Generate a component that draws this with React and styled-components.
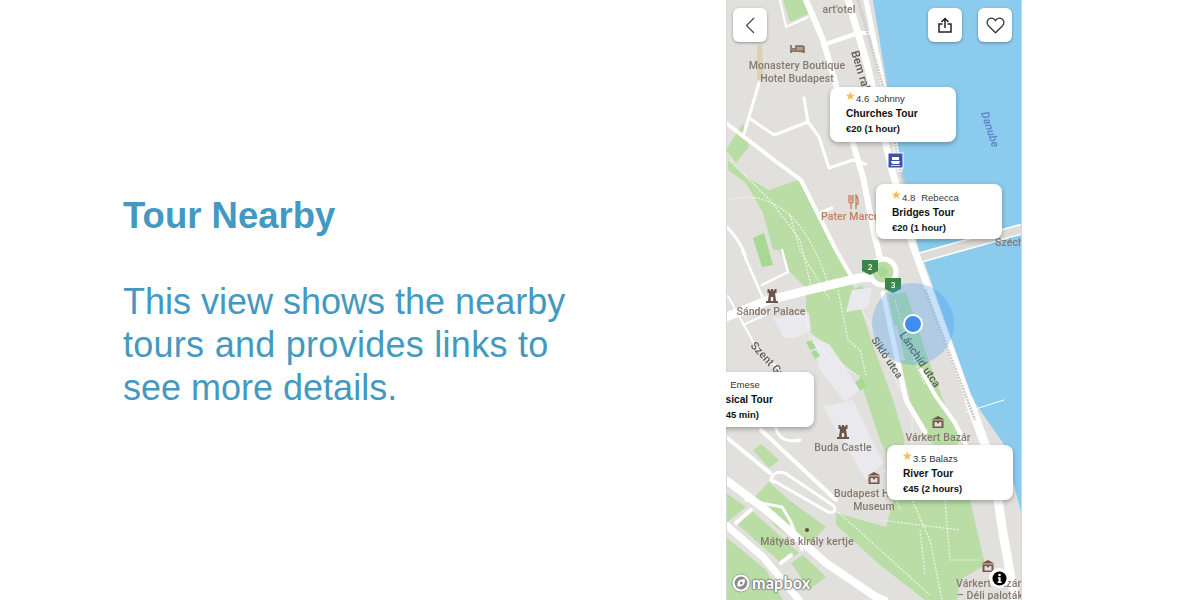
import React from 'react';
import styled, { createGlobalStyle } from 'styled-components';

const GlobalStyle = createGlobalStyle`
  body {
    margin: 0;
    background: #fff;
    font-family: "Liberation Sans", Arial, sans-serif;
  }
`;

const Page = styled.div`
  display: flex;
  width: 1200px;
  height: 600px;
  overflow: hidden;
`;

const Intro = styled.section`
  width: 726px;
  flex-shrink: 0;
  box-sizing: border-box;
  padding: 194px 0 0 123px;
  color: #4399c0;
  font-size: 36px;
  line-height: 43px;
`;

const Title = styled.h1`
  margin: 0 0 43px;
  font-size: 36.5px;
  line-height: 43px;
  font-weight: 700;
`;

const BodyLine = styled.div`
  letter-spacing: ${(p) => p.$tracking || 0}px;
  white-space: nowrap;
`;

const Phone = styled.div`
  position: relative;
  flex-shrink: 0;
  width: 296px;
  height: 600px;
  overflow: hidden;
  box-sizing: border-box;
`;

const MapSvg = styled.svg`
  display: block;
  width: 296px;
  height: 600px;
  filter: blur(0.35px);
`;

const MapLabel = styled.text`
  font-family: Roboto, "Noto Sans", sans-serif;
  font-size: ${(p) => p.$size || 10.5}px;
  font-weight: 500;
  fill: ${(p) => p.$color || '#85796f'};
  font-style: ${(p) => (p.$italic ? 'italic' : 'normal')};
  text-anchor: ${(p) => p.$anchor || 'middle'};
  letter-spacing: 0.1px;
`;

const IconButton = styled.button`
  position: absolute;
  top: 8px;
  left: ${(p) => p.$left}px;
  width: 34px;
  height: 34px;
  padding: 0;
  border: 0;
  border-radius: 6px;
  background: #fff;
  box-shadow: 0 1px 3px rgba(0, 0, 0, 0.35);
  display: flex;
  align-items: center;
  justify-content: center;
`;

const TourCard = styled.div`
  position: absolute;
  left: ${(p) => p.$left}px;
  top: ${(p) => p.$top}px;
  width: 126px;
  height: 55px;
  box-sizing: border-box;
  padding: ${(p) => p.$pad}px 0 0 16px;
  border-radius: 8px;
  background: #fff;
  box-shadow: 0 2px 5px rgba(0, 0, 0, 0.3);
  color: #111;
  white-space: nowrap;
`;

const CardRating = styled.div`
  display: flex;
  align-items: center;
  height: 14px;
  margin: 0 0 2px ${(p) => p.$shift || 0}px;
  font-size: 9.5px;
  color: #333;
`;

const Star = styled.span`
  color: #f5c04a;
  font-size: 12px;
  line-height: 11px;
  width: 11px;
  margin: -3px 0 0 -1px;
  font-family: "DejaVu Sans", sans-serif;
`;

const Guide = styled.span`
  margin-left: ${(p) => p.$gap}px;
`;

const CardTitle = styled.div`
  font-size: 10.2px;
  font-weight: 700;
  line-height: 14px;
`;

const CardPrice = styled.div`
  margin-top: 1px;
  font-size: 9.5px;
  font-weight: 700;
  line-height: 14px;
`;

const Attribution = styled.div`
  position: absolute;
  left: 5px;
  bottom: 7px;
  display: flex;
  align-items: center;
  gap: 1px;
`;

const MapboxWord = styled.span`
  font-family: Lato, sans-serif;
  font-weight: 900;
  font-size: 16px;
  line-height: 20px;
  letter-spacing: 0.2px;
  color: #fff;
  text-shadow: 0 0 1.5px #555, 0 0 1.5px #555, 0 0 2px #777;
`;

const InfoHalo = styled.div`
  position: absolute;
  left: 263px;
  top: 568px;
  width: 20px;
  height: 20px;
  border-radius: 50%;
  background: #fff;
  display: flex;
  align-items: center;
  justify-content: center;
`;

const land = '#e2e0dc';
const green = '#b9dda5';
const pale = '#e9e9ee';
const water = '#8bcbee';

const greens = [
  '726,150 743,123 749,147 736,163',
  '728,158 746,177 769,190 798,180 836,250 849,275 858,300 873,345 893,400 905,440 893,470 880,440 859,377 839,360 809,330 806,307 806,288 788,270 779,250 773,250 763,213 746,183 728,170',
  '888,295 906,292 925,350 945,405 960,440 945,460 915,420 905,380',
  '836,513 886,527 893,500 970,500 985,565 960,580 957,600 925,600 880,565 836,525',
  '753,450 761,444 779,460 769,468',
  '754,498 769,482 789,500 826,527 806,547 776,527',
  '726,493 746,507 726,523',
  '736,523 751,510 799,553 781,563',
  '726,537 766,570 783,600 726,600',
  '791,563 803,555 826,577 809,590',
  '846,293 862,285 868,300 850,312',
  '783,0 807,0 808,14 790,22',
];

const paleBlocks = [
  { p: '773,318 809,313 811,330 796,338 784,338', fill: pale },
  { p: '823,407 853,400 883,463 866,480', fill: pale },
  { p: '811,335 830,345 860,390 845,402 820,370', fill: pale },
  { p: '852,290 872,288 868,308 846,312', fill: pale },
  { p: '886,328 897,325 905,360 893,362', fill: land },
];

const brightRects = [
  '753,238 764,233 773,265 762,267',
  '806,342 812,340 816,348 810,350',
  '811,352 816,350 820,356 815,359',
  '855,382 862,378 866,386 860,391',
];

const roads = [
  { d: 'M726 123 L778 163 L801 180 L836 250 L851 276', w: 4 },
  { d: 'M759 83 L743 137', w: 3 },
  { d: 'M749 118 L774 135 L808 122', w: 3 },
  { d: 'M804 98 L808 122 L819 137 L829 168 L853 160 L866 164', w: 3 },
  { d: 'M780 0 L786 27 L808 17', w: 2 },
  { d: 'M806 0 L823 40 L846 120 L863 177 L874 233 L880 258', w: 6 },
  { d: 'M848 0 L866 60 L892 170 L912 243 L969 400', w: 7 },
  { d: 'M969 400 L993 467 L1003 533 L1015 600', w: 9 },
  { d: 'M866 0 L878 60 L900 170', w: 5 },
  { d: 'M823 45 L858 33 L870 33', w: 4 },
  { d: 'M726 317 L769 300 L809 290 L859 278 L873 277', w: 9 },
  { d: 'M726 437 L770 473', w: 4 },
  { d: 'M761 430 L836 500', w: 4 },
  { d: 'M726 480 L766 510 L826 563 L876 597 L884 600', w: 8 },
  { d: 'M726 525 L763 557 L799 600', w: 7 },
  { d: 'M751 510 L736 523', w: 4 },
  { d: 'M781 563 L791 555', w: 4 },
  { d: 'M771 480 Q773 470 785 473 L834 506 Q837 514 828 512 L776 482 Q770 480 771 480', w: 3 },
  { d: 'M746 500 L782 507 L790 520 L802 550', w: 3 },
  { d: 'M776 428 Q780 444 800 440', w: 3 },
  { d: 'M728 296 L756 347 L783 373', w: 2 },
  { d: 'M743 325 L769 313', w: 2 },
  { d: 'M742 250 L765 303 M762 285 L788 272 L782 250', w: 2.5 },
  { d: 'M726 226 Q740 240 745 255', w: 3 },
  { d: 'M820 213 L832 208', w: 3 },
  { d: 'M883 293 L906 400 L925 432', w: 5 },
  { d: 'M921 370 L935 395 L955 423 L966 445', w: 4 },
  { d: 'M1004 400 L966 412', w: 1 },
];

const dashedPaths = [
  'M729 160 L770 200 L800 240 L812 290',
  'M730 200 Q760 190 790 215 Q815 240 830 290',
  'M790 215 L800 250 L830 300',
  'M806 312 L810 340 L835 362 L860 377',
  'M838 290 L848 340 L860 350 L866 375',
  'M860 305 L880 345 L905 400',
  'M895 300 Q905 340 925 385',
  'M838 512 L930 595',
  'M912 410 L912 500 L930 540 L942 600',
  'M880 520 L960 530 M920 530 L925 575',
  'M945 500 L950 560 L980 560',
  'M885 470 L900 510',
];

const labels = [
  { x: 839, y: 13, text: "art'otel" },
  { x: 797, y: 69, text: 'Monastery Boutique' },
  { x: 797, y: 82, text: 'Hotel Budapest' },
  { x: 821, y: 220, text: 'Pater Marcus', color: '#c27f5c', anchor: 'start' },
  { x: 995, y: 246, text: 'Széchenyi', anchor: 'start' },
  { x: 771, y: 315, text: 'Sándor Palace' },
  { x: 938, y: 441, text: 'Várkert Bazár' },
  { x: 843, y: 451, text: 'Buda Castle' },
  { x: 834, y: 497, text: 'Budapest History', anchor: 'start' },
  { x: 874, y: 510, text: 'Museum' },
  { x: 807, y: 545, text: 'Mátyás király kertje' },
  { x: 956, y: 587, text: 'Várkert Bazár', anchor: 'start' },
  { x: 957, y: 599, text: '– Déli paloták', anchor: 'start' },
];

const streetNames = [
  { x: 851, y: 52, angle: 73, text: 'Bem rakpart', size: 11.5 },
  { x: 981, y: 113, angle: 72, text: 'Danube', color: '#5b80c9', italic: true, size: 11 },
  { x: 750, y: 346, angle: 47, text: 'Szent György', size: 11 },
  { x: 871, y: 340, angle: 56, text: 'Sikló utca' },
  { x: 899, y: 335, angle: 56, text: 'Lánchíd utca', size: 11 },
];

const Museum = ({ x, y }) => (
  <g transform={`translate(${x - 6.5} ${y - 6})`} fill="#75574a">
    <path d="M6.5 0 L13 3.4 H0 Z" />
    <path d="M1 4.4 H12 V12 H1 Z" />
    <path d="M3 6 H5 L6.5 8 L8 6 H10 V10.5 H3 Z" fill="#e2e0dc" />
  </g>
);

const Tower = ({ x, y }) => (
  <g transform={`translate(${x - 6} ${y - 7})`} fill="#6e5348">
    <path d="M1.5 0 H3.5 V1.5 H5 V0 H7 V1.5 H8.5 V0 H10.5 V4 H1.5 Z" />
    <path d="M3 4 H9 L10 12 H12 V14 H0 V12 H2 Z M4.8 12 H7.2 V8.5 Q6 7 4.8 8.5 Z" fillRule="evenodd" />
  </g>
);

const Shield = ({ x, y, n }) => (
  <g transform={`translate(${x} ${y})`}>
    <path d="M-8 -7 H8 V4 L0 8 L-8 4 Z" fill="#3b8548" />
    <text x="0" y="3" textAnchor="middle" fontSize="8" fontWeight="700" fill="#fff" fontFamily="Lato, sans-serif">{n}</text>
  </g>
);

const TownMap = () => (
  <MapSvg viewBox="726 0 296 600">
    <rect x="726" y="0" width="296" height="600" fill={land} />
    <polygon points="873,0 1022,0 1022,516 1003,443 973,400 926,267 919,250 903,183" fill={water} />
    {greens.map((p) => <polygon key={p} points={p} fill={green} />)}
    {paleBlocks.map((b) => <polygon key={b.p} points={b.p} fill={b.fill} />)}
    {brightRects.map((p) => <polygon key={p} points={p} fill="#a9d794" />)}
    <polygon points="757,45 762,45 764,80 757,80" fill="#d9d3b3" />

    {/* bridges */}
    <path d="M915 259 L1022 229" stroke="#fff" strokeWidth="11" fill="none" />
    <path d="M915 259 L1022 229" stroke="#dedcd7" strokeWidth="8" fill="none" />

    {roads.map((r) => (
      <path key={r.d} d={r.d} stroke="#fff" strokeWidth={r.w} fill="none" strokeLinejoin="round" strokeLinecap="round" />
    ))}
    <path d="M858 0 L884 90 L900 170 L918 235" stroke="#cfcdc9" strokeWidth="3" strokeDasharray="2 1" fill="none" />
    <path d="M925 290 L975 420" stroke="#cfcdc9" strokeWidth="3" strokeDasharray="2 1" fill="none" />
    {dashedPaths.map((d) => (
      <path key={d} d={d} stroke="#f3f5ef" strokeWidth="1.2" strokeDasharray="2 1.5" fill="none" />
    ))}

    {/* roundabout */}
    <circle cx="883" cy="272" r="13" fill={green} stroke="#fff" strokeWidth="5" />
    <circle cx="883" cy="272" r="5" fill="#a9d794" />

    {labels.map((l) => (
      <MapLabel key={l.text + l.x} x={l.x} y={l.y} $color={l.color} $anchor={l.anchor}>{l.text}</MapLabel>
    ))}
    {streetNames.map((s) => (
      <MapLabel
        key={s.text}
        transform={`translate(${s.x} ${s.y}) rotate(${s.angle})`}
        $anchor="start"
        $size={s.size}
        $color={s.color || '#5d5a58'}
        $italic={s.italic}
      >
        {s.text}
      </MapLabel>
    ))}

    {/* hotel */}
    <path d="M791 45 V53 M791 51 H804 V53 M804 51 V47 Q804 46 802 46 H796 V49 H792" stroke="#7b6457" strokeWidth="1.5" fill="#b39f90" />
    {/* restaurant */}
    <path d="M849 195 V201 Q849 203 851 203 V209 M851 195 V201 M853 195 V201 Q853 203 851 203 M856 209 V195 Q858.5 197 858 204 H856" stroke="#c27f5c" strokeWidth="1.3" fill="none" />
    {/* ferry */}
    <rect x="888" y="153" width="15" height="15" fill="#3f50ab" stroke="#fff" strokeWidth="1" />
    <path d="M891 161 H900 L899 164 H892 Z M892 157 H899 V160 H892 Z" fill="#fff" />
    <path d="M891 165.5 H900" stroke="#fff" strokeWidth="0.8" />

    <Tower x={772} y={296} />
    <Tower x={843} y={432} />
    <Museum x={938} y={422} />
    <Museum x={874} y={478} />
    <Museum x={988} y={566} />
    <Shield x={870} y={267} n="2" />
    <Shield x={893} y={285} n="3" />
    <circle cx="807" cy="530" r="2" fill="#6a4a3d" />

    {/* current position */}
    <circle cx="913" cy="324" r="41" fill="#3f9bf5" fillOpacity="0.3" />
    <circle cx="913" cy="324" r="9" fill="#3e8ef0" stroke="#fff" strokeWidth="2" />

    {/* screenshot edge */}
    <path d="M726.5 0 V600 M1021.5 0 V600" stroke="#d6d6d6" />
  </MapSvg>
);

const tours = [
  { left: 104, top: 87, pad: 4, rating: '4.6', guide: 'Johnny', gap: 5, title: 'Churches Tour', price: '€20 (1 hour)' },
  { left: 150, top: 184, pad: 6, rating: '4.8', guide: 'Rebecca', gap: 6, title: 'Bridges Tour', price: '€20 (1 hour)' },
  { left: -38, top: 372, pad: 5, shift: -5, rating: '4.2', guide: 'Emese', gap: 8, title: 'Classical Tour', price: '€20 (45 min)' },
  { left: 161, top: 445, pad: 6, rating: '3.5', guide: 'Balazs', gap: 3, title: 'River Tour', price: '€45 (2 hours)' },
];

const App = () => (
  <Page>
    <GlobalStyle />
    <Intro>
      <Title>Tour Nearby</Title>
      <BodyLine>This view shows the nearby</BodyLine>
      <BodyLine $tracking={0.27}>tours and provides links to</BodyLine>
      <BodyLine>see more details.</BodyLine>
    </Intro>
    <Phone>
      <TownMap />
      <IconButton $left={7} aria-label="back">
        <svg width="10" height="17" viewBox="0 0 10 17" fill="none" stroke="#444" strokeWidth="1.2">
          <path d="M9 1 L1.5 8.5 L9 16" />
        </svg>
      </IconButton>
      <IconButton $left={202} aria-label="share">
        <svg width="14" height="16" viewBox="0 0 14 16" fill="none" stroke="#222" strokeWidth="1.5">
          <path d="M7 11 V1.5 M3.5 5 L7 1.5 L10.5 5" />
          <path d="M4.5 7 H1 V15 H13 V7 H9.5" />
        </svg>
      </IconButton>
      <IconButton $left={252} aria-label="favourite">
        <svg width="19" height="17" viewBox="0 0 21 19" fill="none" stroke="#333" strokeWidth="1.4">
          <path d="M10.5 17.6 L2.6 9.8 C-0.6 6 2 1.2 6 1.2 C8 1.2 9.6 2.4 10.5 4 C11.4 2.4 13 1.2 15 1.2 C19 1.2 21.6 6 18.4 9.8 Z" />
        </svg>
      </IconButton>
      {tours.map((t) => (
        <TourCard key={t.title} $left={t.left} $top={t.top} $pad={t.pad}>
          <CardRating $shift={t.shift}>
            <Star>★</Star>
            {t.rating}
            <Guide $gap={t.gap}>{t.guide}</Guide>
          </CardRating>
          <CardTitle>{t.title}</CardTitle>
          <CardPrice>{t.price}</CardPrice>
        </TourCard>
      ))}
      <InfoHalo>
        <svg width="15" height="15" viewBox="0 0 15 15">
          <circle cx="7.5" cy="7.5" r="7" fill="#000" />
          <circle cx="7.5" cy="4" r="1.3" fill="#fff" />
          <path d="M5.8 6.3 H8.6 V10.6 H9.6 V12 H5.6 V10.6 H6.6 V7.6 H5.8 Z" fill="#fff" />
        </svg>
      </InfoHalo>
      <Attribution>
        <svg width="20" height="20" viewBox="0 0 20 20">
          <circle cx="10" cy="10" r="9" fill="#fff" stroke="#777" strokeWidth="0.6" />
          <circle cx="10" cy="10" r="6.4" fill="#8c8c8c" />
          <path d="M6.5 13.5 Q6 8 9 7 Q12 6 14 6.5 Q14 10 12.5 12 Q10 14 6.5 13.5 Z" fill="#fff" />
          <circle cx="10.3" cy="10" r="1.5" fill="#8c8c8c" />
        </svg>
        <MapboxWord>mapbox</MapboxWord>
      </Attribution>
    </Phone>
  </Page>
);

export default App;
